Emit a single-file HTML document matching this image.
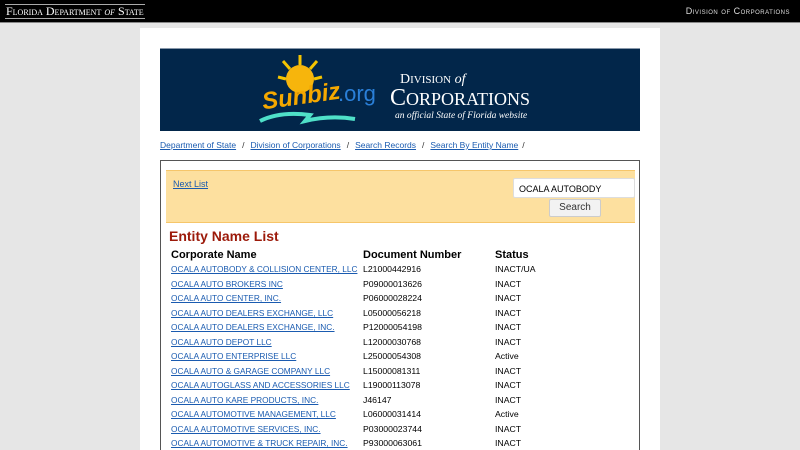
<!DOCTYPE html>
<html><head><meta charset="utf-8"><style>
html,body{margin:0;width:800px;height:450px;overflow:hidden;}
body{background:#e6e6e6;font-family:"Liberation Sans",sans-serif;position:relative;}
.top{position:absolute;left:0;top:0;width:800px;height:22px;background:#000;border-bottom:1px solid #888;}
.top .l{position:absolute;left:5px;top:4px;color:#fff;font-family:"Liberation Serif",serif;font-size:12px;border-top:1px solid #aaa;border-bottom:1px solid #aaa;line-height:13px;padding:0 1px;font-variant:small-caps;}
.top .r{position:absolute;right:10px;top:6px;color:#ddd;font-size:9px;font-variant:small-caps;letter-spacing:.5px;}
.main{position:absolute;left:140px;top:28px;width:520px;height:422px;background:#fff;overflow:hidden;}
.banner{position:absolute;left:20px;top:20px;width:480px;height:82px;background:#02264a;border-top:1px solid #8898aa;}
.crumb{position:absolute;left:20px;top:112px;font-size:8.5px;color:#333;white-space:nowrap;}
.crumb a{color:#1a5bb0;text-decoration:underline;}
.crumb span{margin:0 6px;}
.box{position:absolute;left:20px;top:132px;width:478px;height:300px;border:1px solid #555;overflow:hidden;}
.yel{position:absolute;left:5px;top:9px;width:469px;height:51px;background:#fde09f;border-top:1px solid #f6c66a;border-bottom:1px solid #f6c66a;}
.yel a{position:absolute;left:7px;top:8px;font-size:9px;color:#1a5bb0;text-decoration:underline;}
.inp{position:absolute;left:347px;top:7px;width:122px;height:20px;background:#fff;border:1px solid #ddd;border-radius:2px;font-size:9px;line-height:20px;padding-left:5px;box-sizing:border-box;}
.btn{position:absolute;left:383px;top:28px;width:50px;height:16px;background:#f2f2f2;border:1px solid #ccc;border-radius:2px;font-size:10px;text-align:center;line-height:16px;color:#333;}
h1{position:absolute;left:8px;top:67px;margin:0;font-size:14px;color:#9c1a0a;font-weight:bold;}
table{position:absolute;left:8px;top:86px;border-collapse:collapse;font-size:8.7px;}
th{text-align:left;font-size:11px;padding:0 0 0 2px;height:15px;}
td{height:14.5px;padding:0 0 0 2px;white-space:nowrap;}
td a{color:#1a5bb0;text-decoration:underline;font-size:8.3px;}
</style></head><body>
<div class="top"><div class="l">Florida Department <i>of</i> State</div><div class="r">Division of Corporations</div></div>
<div class="main">
<div class="banner">
<svg width="480" height="82" viewBox="0 0 480 82">
<g transform="translate(140,30)">
<circle cx="0" cy="0" r="14" fill="#f7b50c"/>
<g stroke="#f5c400" stroke-width="3">
<line x1="0" y1="-14" x2="0" y2="-24"/><line x1="10" y1="-10" x2="17" y2="-18"/><line x1="-10" y1="-10" x2="-17" y2="-18"/><line x1="14" y1="0" x2="22" y2="-2"/><line x1="-14" y1="0" x2="-22" y2="-2"/>
</g></g>
<text x="102" y="58" font-family="Liberation Sans" font-style="italic" font-weight="bold" font-size="24" fill="#f5a800" transform="rotate(-8 120 50)">Sunbiz</text>
<text x="178" y="52" font-family="Liberation Sans" font-size="22" fill="#2a7fd8">.org</text>
<path d="M100 72 Q120 62 150 66 L145 72 Q170 66 195 70" stroke="#4fe0c8" stroke-width="4" fill="none"/>
<text x="240" y="34" font-family="Liberation Serif" font-size="14" fill="#fff">D<tspan font-size="11">IVISION</tspan> <tspan font-style="italic">of</tspan></text>
<text x="230" y="56" font-family="Liberation Serif" font-size="24" fill="#fff">C<tspan font-size="18">ORPORATIONS</tspan></text>
<text x="235" y="69" font-family="Liberation Serif" font-style="italic" font-size="9.5" fill="#fff">an official State of Florida website</text>
</svg>
</div>
<div class="crumb"><a>Department of State</a><span>/</span><a>Division of Corporations</a><span>/</span><a>Search Records</a><span>/</span><a>Search By Entity Name</a><span style="margin-left:4px">/</span></div>
<div class="box">
<div class="yel"><a>Next List</a><div class="inp">OCALA AUTOBODY</div><div class="btn">Search</div></div>
<h1>Entity Name List</h1>
<table>
<tr><th style="width:190px">Corporate Name</th><th style="width:130px">Document Number</th><th>Status</th></tr>
<tr><td><a>OCALA AUTOBODY &amp; COLLISION CENTER, LLC</a></td><td>L21000442916</td><td>INACT/UA</td></tr>
<tr><td><a>OCALA AUTO BROKERS INC</a></td><td>P09000013626</td><td>INACT</td></tr>
<tr><td><a>OCALA AUTO CENTER, INC.</a></td><td>P06000028224</td><td>INACT</td></tr>
<tr><td><a>OCALA AUTO DEALERS EXCHANGE, LLC</a></td><td>L05000056218</td><td>INACT</td></tr>
<tr><td><a>OCALA AUTO DEALERS EXCHANGE, INC.</a></td><td>P12000054198</td><td>INACT</td></tr>
<tr><td><a>OCALA AUTO DEPOT LLC</a></td><td>L12000030768</td><td>INACT</td></tr>
<tr><td><a>OCALA AUTO ENTERPRISE LLC</a></td><td>L25000054308</td><td>Active</td></tr>
<tr><td><a>OCALA AUTO &amp; GARAGE COMPANY LLC</a></td><td>L15000081311</td><td>INACT</td></tr>
<tr><td><a>OCALA AUTOGLASS AND ACCESSORIES LLC</a></td><td>L19000113078</td><td>INACT</td></tr>
<tr><td><a>OCALA AUTO KARE PRODUCTS, INC.</a></td><td>J46147</td><td>INACT</td></tr>
<tr><td><a>OCALA AUTOMOTIVE MANAGEMENT, LLC</a></td><td>L06000031414</td><td>Active</td></tr>
<tr><td><a>OCALA AUTOMOTIVE SERVICES, INC.</a></td><td>P03000023744</td><td>INACT</td></tr>
<tr><td><a>OCALA AUTOMOTIVE &amp; TRUCK REPAIR, INC.</a></td><td>P93000063061</td><td>INACT</td></tr>
</table>
</div>
</div>
</body></html>
